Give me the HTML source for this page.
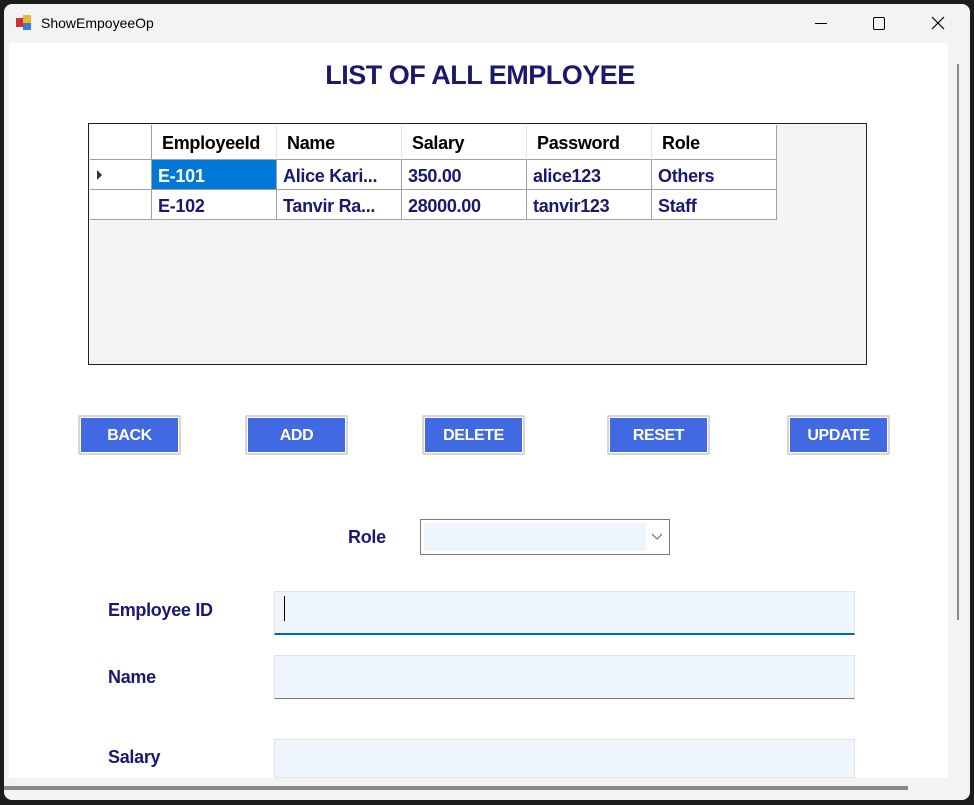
<!DOCTYPE html>
<html><head><style>
body{margin:0;width:974px;height:805px;background:#1c1c1c;position:relative;overflow:hidden;font-family:"Liberation Sans",sans-serif}
.a{position:absolute}
.win{left:4px;top:4px;width:966px;height:796px;background:#f3f3f3;border-radius:8px}
.client{left:9px;top:43px;width:939px;height:735px;background:#fff}
.nv{color:#191970;font-weight:bold}
.cell{position:absolute;box-sizing:border-box;border-right:1px solid #a0a0a0;border-bottom:1px solid #a0a0a0;background:#fff;font-size:18px;font-weight:bold;color:#191970;padding:6px 0 0 6px;white-space:nowrap;overflow:hidden;letter-spacing:-0.3px}
.hd{color:#000;background:#fff;border-bottom:1px solid #a0a0a0;border-right:1px solid #e6e6e6;padding-top:8px;padding-left:10px}
.btn{position:absolute;top:415px;width:103px;height:40px;box-sizing:border-box;border:2px solid #d6d6d6;border-radius:2px;background:#4169e1;box-shadow:inset 0 0 0 1px #fff;color:#fff;font-weight:bold;font-size:16px;text-align:center;line-height:38px;letter-spacing:-0.4px}
.tb{position:absolute;left:274px;width:581px;background:#eef5fd;border:1px solid #e3e3e3;box-sizing:border-box}
.lbl{position:absolute;font-size:18px;font-weight:bold;color:#191970;letter-spacing:-0.3px}
</style></head><body>
<div class="a win"></div>
<svg class="a" style="left:15px;top:14px" width="18" height="18"><rect x="1" y="4" width="7" height="9" fill="#c33"/><rect x="8" y="1" width="8" height="8" fill="#e8b830"/><rect x="8" y="9" width="8" height="7" fill="#3b7bd1"/></svg>
<div class="a" style="left:41px;top:15px;font-size:14px;color:#000">ShowEmpoyeeOp</div>
<div class="a" style="left:815px;top:23px;width:12px;height:1px;background:#000"></div>
<div class="a" style="left:873px;top:17px;width:10px;height:11px;border:1px solid #000;border-radius:2px"></div>
<svg class="a" style="left:931px;top:16px" width="14" height="14"><path d="M1 1L13 13M13 1L1 13" stroke="#000" stroke-width="1.2"/></svg>
<div class="a client"></div>
<div class="a" style="left:957px;top:64px;width:2px;height:556px;background:#8a8a8a"></div>
<div class="a" style="left:4px;top:786px;width:904px;height:4px;background:#8a8a8a"></div>
<div class="a nv" style="left:0;width:960px;top:60px;text-align:center;font-size:27px;letter-spacing:-0.5px">LIST OF ALL EMPLOYEE</div>
<div class="a" style="left:88px;top:123px;width:779px;height:242px;box-sizing:border-box;border:1px solid #222;background:#f4f4f4"></div>
<div class="cell hd" style="left:90px;top:125px;width:62px;height:35px;border-right:1px solid #a0a0a0"></div>
<div class="cell hd" style="left:152px;top:125px;width:125px;height:35px">EmployeeId</div>
<div class="cell hd" style="left:277px;top:125px;width:125px;height:35px">Name</div>
<div class="cell hd" style="left:402px;top:125px;width:125px;height:35px">Salary</div>
<div class="cell hd" style="left:527px;top:125px;width:125px;height:35px">Password</div>
<div class="cell hd" style="left:652px;top:125px;width:125px;height:35px;border-right:1px solid #a0a0a0">Role</div>
<div class="cell" style="left:90px;top:160px;width:62px;height:30px"></div>
<svg class="a" style="left:97px;top:170px" width="6" height="10"><path d="M0 0L5 5L0 10Z" fill="#333"/></svg>
<div class="cell" style="left:152px;top:160px;width:125px;height:30px;background:#0078d7;color:#fff">E-101</div>
<div class="cell" style="left:277px;top:160px;width:125px;height:30px">Alice Kari...</div>
<div class="cell" style="left:402px;top:160px;width:125px;height:30px">350.00</div>
<div class="cell" style="left:527px;top:160px;width:125px;height:30px">alice123</div>
<div class="cell" style="left:652px;top:160px;width:125px;height:30px">Others</div>
<div class="cell" style="left:90px;top:190px;width:62px;height:30px"></div>
<div class="cell" style="left:152px;top:190px;width:125px;height:30px">E-102</div>
<div class="cell" style="left:277px;top:190px;width:125px;height:30px">Tanvir Ra...</div>
<div class="cell" style="left:402px;top:190px;width:125px;height:30px">28000.00</div>
<div class="cell" style="left:527px;top:190px;width:125px;height:30px">tanvir123</div>
<div class="cell" style="left:652px;top:190px;width:125px;height:30px">Staff</div>
<div class="btn" style="left:78px">BACK</div>
<div class="btn" style="left:245px">ADD</div>
<div class="btn" style="left:422px">DELETE</div>
<div class="btn" style="left:607px">RESET</div>
<div class="btn" style="left:787px">UPDATE</div>
<div class="lbl" style="left:348px;top:527px">Role</div>
<div class="a" style="left:420px;top:519px;width:250px;height:36px;box-sizing:border-box;border:1px solid #7a7a7a;background:#fff"></div>
<div class="a" style="left:424px;top:523px;width:222px;height:28px;background:#eef5fd"></div>
<svg class="a" style="left:652px;top:533px" width="10" height="7"><path d="M0 1L5 6L10 1" fill="none" stroke="#666"/></svg>
<div class="lbl" style="left:108px;top:600px">Employee ID</div>
<div class="tb" style="top:591px;height:44px;border-bottom:2px solid #0067c0"></div>
<div class="a" style="left:284px;top:596px;width:1px;height:25px;background:#000"></div>
<div class="lbl" style="left:108px;top:667px">Name</div>
<div class="tb" style="top:655px;height:44px;border-bottom:1px solid #777"></div>
<div class="lbl" style="left:108px;top:747px">Salary</div>
<div class="tb" style="top:739px;height:39px"></div>
</body></html>
